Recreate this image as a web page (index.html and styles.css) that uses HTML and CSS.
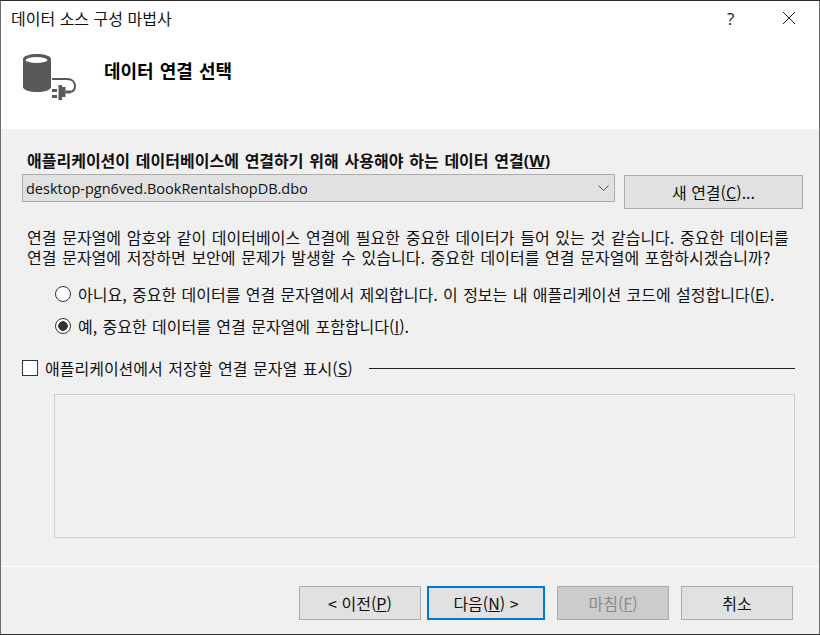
FILE: index.html
```html
<!DOCTYPE html>
<html lang="ko">
<head>
<meta charset="utf-8">
<title>데이터 소스 구성 마법사</title>
<link rel="stylesheet" href="styles.css">
</head>
<body>
<div class="window">
  <header class="head">
    <div class="titlebar">
      <span class="title">데이터 소스 구성 마법사</span>
      <span class="help">?</span>
      <svg class="close" width="14" height="14" viewBox="0 0 14 14"><path d="M1 1L13 13M13 1L1 13" stroke="#222" stroke-width="1" fill="none"/></svg>
    </div>
    <div class="banner">
      <svg class="dbicon" width="56" height="46" viewBox="0 0 56 46">
        <path d="M1 5C1 2 8 0 15 0S29 2 29 5V33C29 36 22 38 15 38S1 36 1 33Z" fill="#585858"/>
        <ellipse cx="14.500" cy="6" rx="11" ry="3" fill="#fff"/>
        <path d="M30 25H45C50 25 53 28 53 32C53 35 51 37.500 48 38" stroke="#585858" stroke-width="2" fill="none"/>
        <path d="M36.500 31H40V33H43.500V43H40V46H36.500Z" fill="#585858"/>
        <rect x="43.500" y="36.500" width="5" height="3" fill="#585858"/>
        <path d="M30 35H35V38H30ZM30 41H35V44H30Z" fill="#585858"/>
      </svg>
      <h1 class="heading">데이터 연결 선택</h1>
    </div>
  </header>
  <main class="content">
    <label class="fieldlabel">애플리케이션이 데이터베이스에 연결하기 위해 사용해야 하는 데이터 연결<span class="key">(<u>W</u>)</span></label>
    <div class="connrow">
      <div class="combo">
        <span>desktop-pgn6ved.BookRentalshopDB.dbo</span>
        <svg width="11" height="6" viewBox="0 0 11 6"><path d="M.5 .5L5.500 5.500L10.500 .5" stroke="#555" fill="none"/></svg>
      </div>
      <button class="btn newconn">새 연결(<u>C</u>)...</button>
    </div>
    <p class="warn">연결 문자열에 암호와 같이 데이터베이스 연결에 필요한 중요한 데이터가 들어 있는 것 같습니다. 중요한 데이터를<br>연결 문자열에 저장하면 보안에 문제가 발생할 수 있습니다. 중요한 데이터를 연결 문자열에 포함하시겠습니까?</p>
    <div class="radios">
      <div class="radio"><span class="dot"></span><span>아니요, 중요한 데이터를 연결 문자열에서 제외합니다. 이 정보는 내 애플리케이션 코드에 설정합니다(<u>E</u>).</span></div>
      <div class="radio on"><span class="dot"></span><span>예, 중요한 데이터를 연결 문자열에 포함합니다(<u>I</u>).</span></div>
    </div>
    <div class="showrow">
      <span class="check"></span>
      <span class="showlabel">애플리케이션에서 저장할 연결 문자열 표시(<u>S</u>)</span>
      <span class="rule"></span>
    </div>
    <div class="connbox"></div>
  </main>
  <footer class="foot">
    <button class="btn prev">&lt; 이전(<u>P</u>)</button>
    <button class="btn next">다음(<u>N</u>) &gt;</button>
    <button class="btn finish" disabled>마침(<u>F</u>)</button>
    <button class="btn cancel">취소</button>
  </footer>
</div>
</body>
</html>
```
FILE: styles.css
```css
* { box-sizing: border-box; }
html, body { margin: 0; padding: 0; }
body {
  width: 820px;
  height: 635px;
  overflow: hidden;
  font-family: "Noto Sans CJK KR", "Open Sans", sans-serif;
  font-size: 16px;
  word-spacing: 0.900px;
  color: #111;
}
.window {
  width: 820px;
  height: 635px;
  display: flex;
  flex-direction: column;
  background: #f0f0f0;
  border: 1px solid #6b6b6b;
  border-top-color: #2c2c2c;
  border-bottom-color: #2c2c2c;
}
.head { height: 128px; background: #fff; flex: none; }
.titlebar {
  height: 37px;
  display: flex;
  align-items: center;
  padding-left: 10px;
  padding-bottom: 3px;
}
.title { flex: 1; word-spacing: 0; }
.help { font-size: 17px; width: 12px; margin-right: 43px; font-family: "Open Sans", sans-serif; color: #222; }
.close { margin-right: 23px; }
.banner {
  display: flex;
  align-items: flex-start;
  padding-left: 21px;
}
.dbicon { flex: none; margin-top: 16px; }
.heading {
  margin: 20px 0 0 26px;
  font-size: 18px;
  font-weight: 700;
  line-height: 24px;
  word-spacing: 1px;
  color: #000;
}
.content {
  flex: 1;
  padding: 20px 16px 0 21px;
  border-bottom: 1px solid #fff;
}
.fieldlabel {
  display: block;
  margin-left: 5px;
  font-weight: 700;
  line-height: 22px;
  white-space: nowrap;
  word-spacing: 1.300px;
}
.key { font-family: "Open Sans", sans-serif; font-size: 16px; }
u { text-underline-offset: 1px; }
.connrow {
  display: flex;
  align-items: flex-start;
  gap: 9px;
  margin-top: 2px;
}
.combo {
  width: 593px;
  height: 28px;
  background: #e1e1e1;
  border: 1px solid #adadad;
  display: flex;
  align-items: center;
  justify-content: space-between;
  padding: 0 5px 0 3px;
  font-family: "Open Sans", sans-serif;
  font-size: 14.500px;
}
.btn {
  font-family: "Noto Sans CJK KR", "Open Sans", sans-serif;
  font-size: 16px;
  word-spacing: 0;
  color: #111;
  background: #e1e1e1;
  border: 1px solid #adadad;
  padding: 0;
  height: 34px;
  flex: none;
}
.newconn { width: 179px; margin-top: 1px; }
.warn {
  margin: 19px 0 0 5px;
  line-height: 19.500px;
  white-space: nowrap;
  word-spacing: 1.250px;
}
.radios { margin: 11px 0 0 33px; }
.radio {
  display: flex;
  align-items: center;
  gap: 7px;
  height: 32px;
  white-space: nowrap;
}
.dot {
  width: 16px;
  height: 16px;
  border-radius: 50%;
  border: 1px solid #333;
  background: #fff;
  flex: none;
}
.on .dot {
  background: radial-gradient(circle, #333 0 4.500px, #fff 5px);
}
.showrow {
  display: flex;
  align-items: center;
  margin-top: 14px;
  height: 24px;
}
.check {
  width: 16px;
  height: 16px;
  border: 1px solid #333;
  background: #fff;
  flex: none;
  margin-right: 7px;
}
.showlabel { white-space: nowrap; word-spacing: 1.100px; }
.rule { flex: 1; height: 1px; background: #222; margin: 0 8px 0 16px; }
.connbox {
  width: 741px;
  height: 144px;
  margin: 14px 0 0 32px;
  background: #f0f0f0;
  border: 1px solid #cfcfcf;
}
.foot {
  height: 67px;
  flex: none;
  display: flex;
  align-items: flex-start;
  padding: 19px 0 0 298px;
}
.prev { width: 122px; }
.next {
  width: 118px;
  margin-left: 6px;
  border: 2px solid #0078d7;
}
.finish {
  width: 112px;
  margin-left: 12px;
  background: #ccc;
  color: #8a8a8a;
}
.cancel { width: 112px; margin-left: 12px; }
```
